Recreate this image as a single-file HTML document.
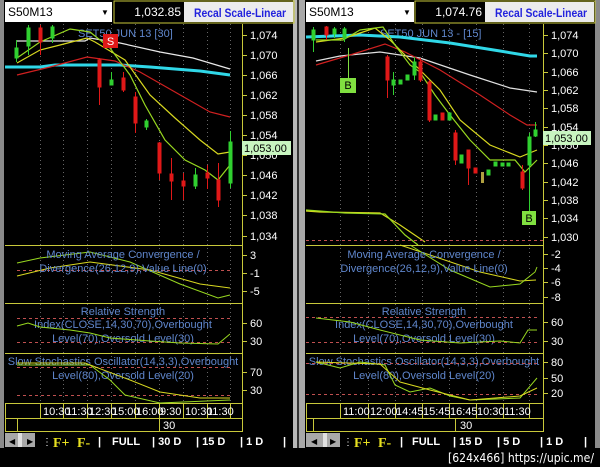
<!DOCTYPE html>
<html><head><meta charset="utf-8"><style>
html,body{margin:0;padding:0;background:#000;width:600px;height:467px;overflow:hidden}
svg{display:block;font-family:"Liberation Sans",sans-serif}
</style></head><body>
<svg width="600" height="467" viewBox="0 0 600 467" xmlns="http://www.w3.org/2000/svg">
<rect width="600" height="467" fill="#000"/>
<rect x="0" y="0" width="4" height="448" fill="#8a8a8a"/>
<rect x="293" y="0" width="4" height="448" fill="#b8b8b8"/>
<rect x="297" y="0" width="2" height="448" fill="#333"/>
<rect x="299" y="0" width="6" height="448" fill="#a8a8a8"/>
<rect x="595" y="0" width="5" height="448" fill="#8a8a8a"/>

<!-- ===== LEFT PANEL ===== -->
<g>
<rect x="5" y="2" width="107" height="20" fill="#fff"/>
<text x="8" y="16" font-size="12" fill="#000">S50M13</text>
<text x="101" y="15" font-size="8" fill="#000">▼</text>
<rect x="114" y="1" width="180" height="22" fill="none" stroke="#c8c83a" stroke-width="1"/>
<rect x="115" y="2" width="68" height="20" fill="#000"/>
<text x="181" y="16" font-size="12" fill="#fff" text-anchor="end">1,032.85</text>
<rect x="184" y="2" width="109" height="20" fill="#ececec"/>
<text x="194" y="17" font-size="12" font-weight="bold" fill="#2222dd" textLength="92" lengthAdjust="spacingAndGlyphs">Recal Scale-Linear</text>
<g stroke="#c8c83a" fill="none" stroke-width="1">
<line x1="242.5" y1="24" x2="242.5" y2="432"/>
<line x1="5" y1="245.5" x2="242" y2="245.5"/>
<line x1="5" y1="303.5" x2="242" y2="303.5"/>
<line x1="5" y1="353.5" x2="242" y2="353.5"/>
<line x1="5" y1="403.5" x2="242" y2="403.5"/>
<line x1="5" y1="418.5" x2="242" y2="418.5"/>
<line x1="5" y1="431.5" x2="242" y2="431.5"/>
<line x1="5.5" y1="403" x2="5.5" y2="432"/>
<line x1="17.5" y1="418" x2="17.5" y2="432"/>
<line x1="159.5" y1="418" x2="159.5" y2="432"/>
</g>
<g stroke="#666" stroke-dasharray="1,3" stroke-width="1">
<line x1="40.5" y1="24" x2="40.5" y2="403"/><line x1="63.5" y1="24" x2="63.5" y2="403"/><line x1="87.5" y1="24" x2="87.5" y2="403"/><line x1="111.5" y1="24" x2="111.5" y2="403"/><line x1="135.5" y1="24" x2="135.5" y2="403"/><line x1="159.5" y1="24" x2="159.5" y2="403"/><line x1="183.5" y1="24" x2="183.5" y2="403"/><line x1="207.5" y1="24" x2="207.5" y2="403"/><line x1="230.5" y1="24" x2="230.5" y2="403"/>
</g>
<g font-size="11" fill="#fff">
<text x="250" y="39">1,074</text><text x="250" y="59">1,070</text><text x="250" y="79">1,066</text><text x="250" y="99">1,062</text><text x="250" y="119">1,058</text><text x="250" y="139">1,054</text><text x="250" y="159">1,050</text><text x="250" y="179">1,046</text><text x="250" y="199">1,042</text><text x="250" y="219">1,038</text><text x="250" y="240">1,034</text>
<text x="250" y="259">3</text><text x="250" y="277">-1</text><text x="250" y="295">-5</text>
<text x="250" y="327">60</text><text x="250" y="345">30</text>
<text x="250" y="376">70</text><text x="250" y="394">30</text>
</g>
<g stroke="#c8c83a" stroke-width="1">
<line x1="242" y1="35.5" x2="247" y2="35.5"/><line x1="242" y1="55.5" x2="247" y2="55.5"/><line x1="242" y1="75.5" x2="247" y2="75.5"/><line x1="242" y1="95.5" x2="247" y2="95.5"/><line x1="242" y1="115.5" x2="247" y2="115.5"/><line x1="242" y1="135.5" x2="247" y2="135.5"/><line x1="242" y1="155.5" x2="247" y2="155.5"/><line x1="242" y1="175.5" x2="247" y2="175.5"/><line x1="242" y1="195.5" x2="247" y2="195.5"/><line x1="242" y1="215.5" x2="247" y2="215.5"/><line x1="242" y1="236.5" x2="247" y2="236.5"/>
<line x1="242" y1="255.5" x2="247" y2="255.5"/><line x1="242" y1="273.5" x2="247" y2="273.5"/><line x1="242" y1="291.5" x2="247" y2="291.5"/>
<line x1="242" y1="323.5" x2="247" y2="323.5"/><line x1="242" y1="341.5" x2="247" y2="341.5"/>
<line x1="242" y1="372.5" x2="247" y2="372.5"/><line x1="242" y1="390.5" x2="247" y2="390.5"/>
</g>
<rect x="242" y="141" width="49" height="14" fill="#c8f5c0"/>
<text x="244" y="152" font-size="11" fill="#000">1,053.00</text>
<text x="78" y="37" font-size="11" fill="#5f86cc">SET50 JUN 13   [30]</text>
<g fill="none" stroke-width="1.2">
<polyline stroke="#e8e8e8" points="17,41 85,41 90,38 120,43 160,52 193,58 230,69"/>
<polyline stroke="#30d8e8" stroke-width="3" points="5,67 40,67 55,65 120,65 150,67 200,71 230,75"/>
<polyline stroke="#d02020" points="17,75 50,67 87,57 115,61 140,72 175,92 210,112 230,117"/>
<polyline stroke="#d8d820" points="17,63 40,50 60,45 87,38 95,42 125,60 150,95 175,118 200,140 218,154 230,152"/>
<polyline stroke="#98d820" points="17,58 40,42 70,29 90,32 110,48 130,75 145,105 165,140 185,160 205,170 218,180 230,165"/>
</g>
<g stroke-width="1">
<g stroke="#30d030" fill="#30d030">
<line x1="16.5" y1="40" x2="16.5" y2="62"/><rect x="15" y="48" width="3" height="10"/>
<line x1="28.5" y1="25" x2="28.5" y2="55"/><rect x="27" y="28" width="3" height="18"/>
<line x1="52.5" y1="25" x2="52.5" y2="43"/><rect x="51" y="27" width="3" height="11"/>
<line x1="111.5" y1="72" x2="111.5" y2="85"/><rect x="110" y="80" width="3" height="5"/>
<line x1="146.5" y1="119" x2="146.5" y2="130"/><rect x="145" y="121" width="3" height="6"/>
<line x1="195.5" y1="168" x2="195.5" y2="189"/><rect x="194" y="175" width="3" height="11"/>
<line x1="230.5" y1="131" x2="230.5" y2="188"/><rect x="229" y="142" width="3" height="41"/>
</g>
<g stroke="#e01818" fill="#e01818">
<line x1="40.5" y1="25" x2="40.5" y2="55"/><rect x="39" y="28" width="3" height="14"/>
<line x1="99.5" y1="58" x2="99.5" y2="105"/><rect x="98" y="60" width="3" height="27"/>
<line x1="123.5" y1="72" x2="123.5" y2="92"/><rect x="122" y="78" width="3" height="12"/>
<line x1="135.5" y1="92" x2="135.5" y2="133"/><rect x="134" y="97" width="3" height="26"/>
<line x1="159.5" y1="142" x2="159.5" y2="180"/><rect x="158" y="143" width="3" height="30"/>
<line x1="171.5" y1="158" x2="171.5" y2="200"/><rect x="170" y="174" width="3" height="7"/>
<line x1="183.5" y1="173" x2="183.5" y2="200"/><rect x="182" y="181" width="3" height="5"/>
<line x1="207.5" y1="165" x2="207.5" y2="189"/><rect x="206" y="173" width="3" height="5"/>
<line x1="218.5" y1="163" x2="218.5" y2="207"/><rect x="217" y="180" width="3" height="20"/>
</g>
</g>
<rect x="103" y="34" width="15" height="14" fill="#e01818"/>
<text x="110.5" y="45" font-size="11" fill="#fff" text-anchor="middle">S</text>
<line x1="17" y1="270.5" x2="230" y2="270.5" stroke="#c05050" stroke-dasharray="3,3"/>
<polyline fill="none" stroke="#98d820" points="17,263 40,258 90,252 130,262 180,284 218,298 230,295"/>
<polyline fill="none" stroke="#d8d820" points="17,276 50,268 90,262 150,270 200,284 230,288"/>
<g font-size="11" fill="#5f86cc" text-anchor="middle">
<text x="123" y="258">Moving Average Convergence /</text>
<text x="123" y="272">Divergence(26,12,9),Value Line(0)</text>
<text x="123" y="315">Relative Strength</text>
<text x="123" y="328">Index(CLOSE,14,30,70),Overbought</text>
<text x="123" y="342">Level(70),Oversold Level(30)</text>
<text x="123" y="365">Slow Stochastics Oscillator(14,3,3),Overbought</text>
<text x="123" y="379">Level(80),Oversold Level(20)</text>
</g>
<line x1="17" y1="318.5" x2="230" y2="318.5" stroke="#c05050" stroke-dasharray="3,3"/>
<line x1="17" y1="342.5" x2="230" y2="342.5" stroke="#c05050" stroke-dasharray="3,3"/>
<polyline fill="none" stroke="#98d820" points="17,326 28,323 40,327 70,330 90,333 110,338 150,341 180,343 218,344 230,334"/>
<line x1="17" y1="367.5" x2="230" y2="367.5" stroke="#c05050" stroke-dasharray="3,3"/>
<line x1="17" y1="395.5" x2="230" y2="395.5" stroke="#c05050" stroke-dasharray="3,3"/>
<polyline fill="none" stroke="#98d820" points="17,365 40,365 90,365 110,380 125,395 160,403 230,400"/>
<polyline fill="none" stroke="#d8d820" points="17,363 85,363 130,380 160,392 200,398 230,398"/>
<g stroke="#c8c83a"><line x1="40.5" y1="403" x2="40.5" y2="418"/><line x1="63.5" y1="403" x2="63.5" y2="418"/><line x1="87.5" y1="403" x2="87.5" y2="418"/><line x1="111.5" y1="403" x2="111.5" y2="418"/><line x1="135.5" y1="403" x2="135.5" y2="418"/><line x1="159.5" y1="403" x2="159.5" y2="418"/><line x1="183.5" y1="403" x2="183.5" y2="418"/><line x1="207.5" y1="403" x2="207.5" y2="418"/><line x1="230.5" y1="403" x2="230.5" y2="418"/></g>
<g font-size="11" fill="#fff"><text x="43" y="415">10:30</text><text x="66" y="415">11:30</text><text x="89" y="415">12:30</text><text x="112" y="415">15:00</text><text x="136" y="415">16:00</text><text x="160" y="415">9:30</text><text x="185" y="415">10:30</text><text x="207" y="415">11:30</text>
<text x="163" y="429">30</text></g>
<rect x="5" y="433" width="30" height="14" fill="#a8a8a8"/>
<rect x="18" y="433" width="4" height="14" fill="#e0e0e0"/>
<text x="9" y="444" font-size="8" fill="#000">◀</text><text x="27" y="444" font-size="8" fill="#000">▶</text>
<text x="42" y="445" font-size="10" fill="#fff">⋮</text>
<g font-weight="bold" font-size="11">
<text x="53" y="447" fill="#e8e020" font-size="14" font-family="Liberation Serif,serif">F+</text>
<text x="77" y="447" fill="#e8e020" font-size="14" font-family="Liberation Serif,serif">F-</text>
<text x="98" y="445" fill="#fff">|</text><text x="112" y="445" fill="#fff">FULL</text>
<text x="152" y="445" fill="#fff">| 30 D</text><text x="196" y="445" fill="#fff">| 15 D</text><text x="240" y="445" fill="#fff">| 1 D</text><text x="283" y="445" fill="#fff">|</text>
</g>
</g>

<!-- ===== RIGHT PANEL ===== -->
<g>
<rect x="306" y="2" width="108" height="20" fill="#fff"/>
<text x="309" y="16" font-size="12" fill="#000">S50M13</text>
<text x="403" y="15" font-size="8" fill="#000">▼</text>
<rect x="415" y="1" width="180" height="22" fill="none" stroke="#c8c83a"/>
<rect x="416" y="2" width="68" height="20" fill="#000"/>
<text x="482" y="16" font-size="12" fill="#fff" text-anchor="end">1,074.76</text>
<rect x="485" y="2" width="109" height="20" fill="#ececec"/>
<text x="495" y="17" font-size="12" font-weight="bold" fill="#2222dd" textLength="92" lengthAdjust="spacingAndGlyphs">Recal Scale-Linear</text>
<g stroke="#c8c83a" fill="none">
<line x1="543.5" y1="24" x2="543.5" y2="432"/>
<line x1="306" y1="245.5" x2="543" y2="245.5"/>
<line x1="306" y1="303.5" x2="543" y2="303.5"/>
<line x1="306" y1="353.5" x2="543" y2="353.5"/>
<line x1="306" y1="403.5" x2="543" y2="403.5"/>
<line x1="306" y1="418.5" x2="543" y2="418.5"/>
<line x1="306" y1="431.5" x2="543" y2="431.5"/>
<line x1="306.5" y1="403" x2="306.5" y2="432"/>
<line x1="313.5" y1="418" x2="313.5" y2="432"/>
<line x1="455.5" y1="418" x2="455.5" y2="432"/>
</g>
<g stroke="#666" stroke-dasharray="1,3">
<line x1="340.5" y1="24" x2="340.5" y2="403"/><line x1="368.5" y1="24" x2="368.5" y2="403"/><line x1="395.5" y1="24" x2="395.5" y2="403"/><line x1="422.5" y1="24" x2="422.5" y2="403"/><line x1="449.5" y1="24" x2="449.5" y2="403"/><line x1="476.5" y1="24" x2="476.5" y2="403"/><line x1="503.5" y1="24" x2="503.5" y2="403"/><line x1="529.5" y1="24" x2="529.5" y2="403"/>
</g>
<g font-size="11" fill="#fff">
<text x="551" y="39">1,074</text><text x="551" y="57">1,070</text><text x="551" y="76">1,066</text><text x="551" y="94">1,062</text><text x="551" y="112">1,058</text><text x="551" y="131">1,054</text><text x="551" y="149">1,050</text><text x="551" y="167">1,046</text><text x="551" y="186">1,042</text><text x="551" y="204">1,038</text><text x="551" y="222">1,034</text><text x="551" y="241">1,030</text>
<text x="551" y="258">-2</text><text x="551" y="272">-4</text><text x="551" y="286">-6</text><text x="551" y="301">-8</text>
<text x="551" y="326">60</text><text x="551" y="345">30</text>
<text x="551" y="366">80</text><text x="551" y="382">50</text><text x="551" y="397">20</text>
</g>
<g stroke="#c8c83a">
<line x1="543" y1="35.5" x2="548" y2="35.5"/><line x1="543" y1="53.5" x2="548" y2="53.5"/><line x1="543" y1="72.5" x2="548" y2="72.5"/><line x1="543" y1="90.5" x2="548" y2="90.5"/><line x1="543" y1="108.5" x2="548" y2="108.5"/><line x1="543" y1="127.5" x2="548" y2="127.5"/><line x1="543" y1="145.5" x2="548" y2="145.5"/><line x1="543" y1="163.5" x2="548" y2="163.5"/><line x1="543" y1="182.5" x2="548" y2="182.5"/><line x1="543" y1="200.5" x2="548" y2="200.5"/><line x1="543" y1="218.5" x2="548" y2="218.5"/><line x1="543" y1="237.5" x2="548" y2="237.5"/>
<line x1="543" y1="254.5" x2="548" y2="254.5"/><line x1="543" y1="268.5" x2="548" y2="268.5"/><line x1="543" y1="282.5" x2="548" y2="282.5"/><line x1="543" y1="297.5" x2="548" y2="297.5"/>
<line x1="543" y1="322.5" x2="548" y2="322.5"/><line x1="543" y1="341.5" x2="548" y2="341.5"/>
<line x1="543" y1="362.5" x2="548" y2="362.5"/><line x1="543" y1="378.5" x2="548" y2="378.5"/><line x1="543" y1="393.5" x2="548" y2="393.5"/>
</g>
<rect x="543" y="131" width="48" height="14" fill="#c8f5c0"/>
<text x="545" y="142" font-size="11" fill="#000">1,053.00</text>
<text x="380" y="37" font-size="11" fill="#5f86cc">SET50 JUN 13 - [15]</text>
<g fill="none" stroke-width="1.2">
<polyline stroke="#30d8e8" stroke-width="3" points="306,37 360,35 400,37 450,43 500,51 530,56 537,56"/>
<polyline stroke="#e0e0e0" points="316,61 340,56 380,52 420,58 470,75 510,88 537,92"/>
<polyline stroke="#d02020" points="316,65 350,55 385,44 405,52 440,70 480,95 510,115 527,125 537,125"/>
<polyline stroke="#d8d820" points="316,42 345,38 360,33 375,28 390,40 410,60 440,90 460,120 490,145 520,157 537,150"/>
<polyline stroke="#98d820" points="316,40 343,40 360,30 383,27 395,45 410,65 420,72 435,95 450,115 470,140 490,160 515,160 525,172 537,160"/>
<polyline stroke="#d8d820" points="306,211 320,212 380,213 400,225 425,242"/>
<polyline stroke="#98d820" points="306,210 345,213 385,214 405,235 418,245"/>
</g>
<line x1="306" y1="240.5" x2="543" y2="240.5" stroke="#c05050" stroke-dasharray="3,3"/>
<g>
<g stroke="#30d030" fill="#30d030">
<line x1="313.5" y1="27" x2="313.5" y2="52"/><rect x="312" y="30" width="3" height="10"/>
<line x1="334.5" y1="27" x2="334.5" y2="38"/><rect x="333" y="29" width="3" height="5"/>
<line x1="344.5" y1="27" x2="344.5" y2="42"/><rect x="343" y="29" width="3" height="9"/>
<line x1="393.5" y1="72" x2="393.5" y2="95"/><rect x="392" y="80" width="3" height="5"/>
<rect x="399" y="80" width="3" height="4"/><rect x="406" y="75" width="3" height="5"/>
<line x1="414.5" y1="57" x2="414.5" y2="80"/><rect x="413" y="62" width="3" height="13"/>
<rect x="434" y="115" width="3" height="5"/><rect x="448" y="113" width="3" height="7"/>
<rect x="460" y="155" width="3" height="8"/><rect x="487" y="170" width="3" height="5"/>
<rect x="494" y="162" width="3" height="4"/><rect x="501" y="163" width="3" height="3"/><rect x="507" y="163" width="3" height="3"/>
<line x1="529.5" y1="133" x2="529.5" y2="217"/><rect x="528" y="137" width="3" height="28"/>
<line x1="535.5" y1="122" x2="535.5" y2="137"/><rect x="534" y="130" width="3" height="6"/>
</g>
<g stroke="#e01818" fill="#e01818">
<line x1="326.5" y1="26" x2="326.5" y2="40"/><rect x="325" y="27" width="3" height="8"/>
<line x1="387.5" y1="55" x2="387.5" y2="98"/><rect x="386" y="57" width="3" height="23"/>
<line x1="420.5" y1="58" x2="420.5" y2="82"/><rect x="419" y="62" width="3" height="18"/>
<line x1="429.5" y1="80" x2="429.5" y2="122"/><rect x="428" y="82" width="3" height="38"/>
<rect x="441" y="113" width="3" height="7"/>
<line x1="455.5" y1="130" x2="455.5" y2="165"/><rect x="454" y="133" width="3" height="27"/>
<line x1="468.5" y1="150" x2="468.5" y2="185"/><rect x="467" y="150" width="3" height="18"/>
<rect x="474" y="168" width="3" height="5"/>
<line x1="522.5" y1="165" x2="522.5" y2="190"/><rect x="521" y="172" width="3" height="16"/>
</g>
<rect x="481" y="172" width="3" height="11" fill="#b0a040"/>
</g>
<line x1="348.5" y1="48" x2="348.5" y2="78" stroke="#80e040"/>
<rect x="340" y="78" width="16" height="15" fill="#80e040"/>
<text x="348" y="89" font-size="11" fill="#000" text-anchor="middle">B</text>
<rect x="522" y="211" width="14" height="14" fill="#80e040"/>
<text x="529" y="222" font-size="11" fill="#000" text-anchor="middle">B</text>
<polyline fill="none" stroke="#d8d820" points="400,245 430,255 480,272 520,281 536,280"/>
<polyline fill="none" stroke="#98d820" points="410,245 450,270 490,287 520,284 535,272 537,267"/>
<g font-size="11" fill="#5f86cc" text-anchor="middle">
<text x="424" y="258">Moving Average Convergence /</text>
<text x="424" y="272">Divergence(26,12,9),Value Line(0)</text>
<text x="424" y="315">Relative Strength</text>
<text x="424" y="328">Index(CLOSE,14,30,70),Overbought</text>
<text x="424" y="342">Level(70),Oversold Level(30)</text>
<text x="424" y="365">Slow Stochastics Oscillator(14,3,3),Overbought</text>
<text x="424" y="379">Level(80),Oversold Level(20)</text>
</g>
<line x1="306" y1="317.5" x2="540" y2="317.5" stroke="#c05050" stroke-dasharray="3,3"/>
<line x1="306" y1="342.5" x2="540" y2="342.5" stroke="#c05050" stroke-dasharray="3,3"/>
<polyline fill="none" stroke="#98d820" points="316,318 350,322 380,330 420,340 460,343 500,341 520,343 528,330 537,330"/>
<line x1="306" y1="363.5" x2="540" y2="363.5" stroke="#c05050" stroke-dasharray="3,3"/>
<line x1="306" y1="394.5" x2="540" y2="394.5" stroke="#c05050" stroke-dasharray="3,3"/>
<polyline fill="none" stroke="#98d820" points="316,362 340,368 360,362 385,365 395,385 410,392 430,388 450,396 470,400 520,398 537,378"/>
<polyline fill="none" stroke="#d8d820" points="316,362 380,364 400,382 430,390 470,400 520,396 537,388"/>
<g stroke="#c8c83a"><line x1="340.5" y1="403" x2="340.5" y2="418"/><line x1="368.5" y1="403" x2="368.5" y2="418"/><line x1="395.5" y1="403" x2="395.5" y2="418"/><line x1="422.5" y1="403" x2="422.5" y2="418"/><line x1="449.5" y1="403" x2="449.5" y2="418"/><line x1="476.5" y1="403" x2="476.5" y2="418"/><line x1="503.5" y1="403" x2="503.5" y2="418"/><line x1="529.5" y1="403" x2="529.5" y2="418"/></g>
<g font-size="11" fill="#fff"><text x="343" y="415">11:00</text><text x="370" y="415">12:00</text><text x="396" y="415">14:45</text><text x="423" y="415">15:45</text><text x="450" y="415">16:45</text><text x="477" y="415">10:30</text><text x="504" y="415">11:30</text>
<text x="460" y="429">30</text></g>
<rect x="306" y="433" width="34" height="14" fill="#a8a8a8"/>
<rect x="323" y="433" width="4" height="14" fill="#e0e0e0"/>
<text x="311" y="444" font-size="8" fill="#000">◀</text><text x="330" y="444" font-size="8" fill="#000">▶</text>
<text x="343" y="445" font-size="10" fill="#fff">⋮</text>
<g font-weight="bold" font-size="11">
<text x="354" y="447" fill="#e8e020" font-size="14" font-family="Liberation Serif,serif">F+</text>
<text x="378" y="447" fill="#e8e020" font-size="14" font-family="Liberation Serif,serif">F-</text>
<text x="400" y="445" fill="#fff">|</text><text x="412" y="445" fill="#fff">FULL</text>
<text x="453" y="445" fill="#fff">| 15 D</text><text x="497" y="445" fill="#fff">| 5 D</text><text x="540" y="445" fill="#fff">| 1 D</text><text x="584" y="445" fill="#fff">|</text>
</g>
</g>
<text x="448" y="462" font-size="12" fill="#fff" font-family="DejaVu Sans,sans-serif" textLength="146" lengthAdjust="spacingAndGlyphs">[624x466] https://upic.me/</text>
</svg>
</body></html>
